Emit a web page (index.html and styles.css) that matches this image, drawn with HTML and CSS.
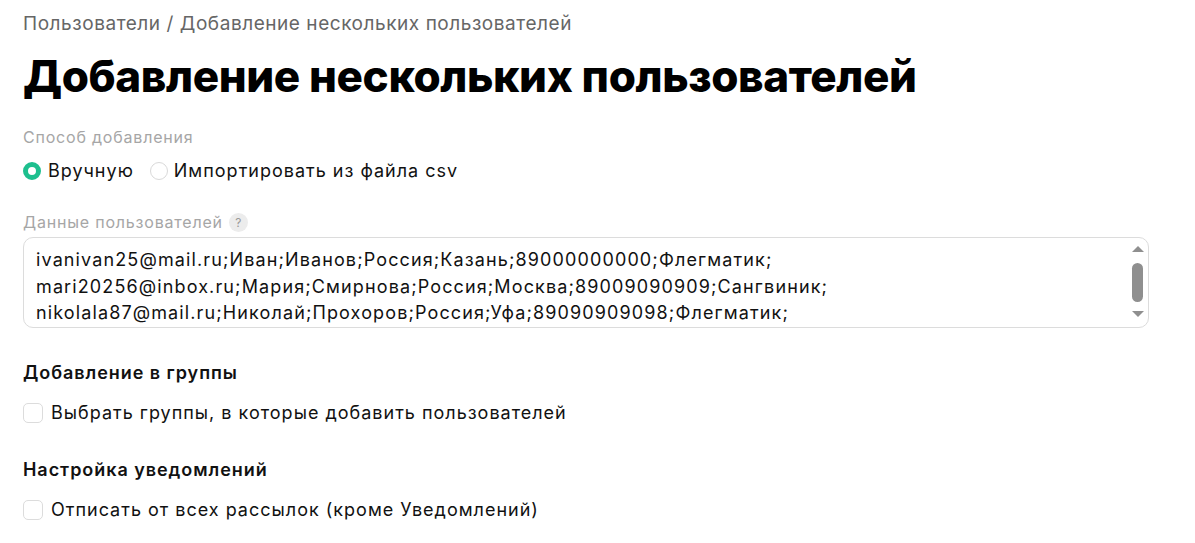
FILE: index.html
```html
<!DOCTYPE html>
<html lang="ru">
<head>
<meta charset="utf-8">
<title>Добавление нескольких пользователей</title>
<link rel="stylesheet" href="styles.css">
</head>
<body>
<div class="page">
  <div class="crumbs">Пользователи / Добавление нескольких пользователей</div>
  <h1 class="title">Добавление нескольких пользователей</h1>

  <div class="field method">
    <div class="label">Способ добавления</div>
    <div class="radios">
      <label class="radio"><span class="dot on"></span><span>Вручную</span></label>
      <label class="radio"><span class="dot"></span><span>Импортировать из файла csv</span></label>
    </div>
  </div>

  <div class="field data">
    <div class="label">Данные пользователей <span class="help">?</span></div>
    <div class="textbox">
      <div class="lines">
        <div>ivanivan25@mail.ru;Иван;Иванов;Россия;Казань;89000000000;Флегматик;</div>
        <div>mari20256@inbox.ru;Мария;Смирнова;Россия;Москва;89009090909;Сангвиник;</div>
        <div>nikolala87@mail.ru;Николай;Прохоров;Россия;Уфа;89090909098;Флегматик;</div>
      </div>
      <div class="sbar">
        <span class="arrow up"></span>
        <span class="thumb"></span>
        <span class="arrow down"></span>
      </div>
    </div>
  </div>

  <div class="section">
    <div class="heading">Добавление в группы</div>
    <label class="check"><span class="box"></span><span>Выбрать группы, в которые добавить пользователей</span></label>
  </div>

  <div class="section">
    <div class="heading">Настройка уведомлений</div>
    <label class="check"><span class="box"></span><span>Отписать от всех рассылок (кроме Уведомлений)</span></label>
  </div>
</div>
</body>
</html>
```

FILE: styles.css
```css
* { box-sizing: border-box; }
html, body { margin: 0; padding: 0; background: #fff; }
body {
  font-family: "Inter", "Noto Sans", sans-serif;
  color: #111;
}
.page {
  padding: 12px 46px 0 23px;
  display: flex;
  flex-direction: column;
}
.crumbs {
  font-size: 19px;
  line-height: 24px;
  letter-spacing: 0.55px;
  color: #666;
}
.title {
  margin: 14px 0 0;
  font-size: 44px;
  line-height: 52px;
  font-weight: 800;
  color: #000;
  letter-spacing: -0.4px;
}
.field { display: flex; flex-direction: column; }
.method { margin-top: 25px; }
.label {
  font-size: 16px;
  line-height: 20px;
  letter-spacing: 0.8px;
  color: #a6a6a6;
  display: flex;
  align-items: center;
  gap: 6px;
}
.radios {
  margin-top: 12px;
  display: flex;
  gap: 16px;
  font-size: 18px;
  line-height: 24px;
  letter-spacing: 1px;
}
.radio { display: flex; align-items: center; gap: 7px; }
.radio + .radio { gap: 6px; }
.dot {
  width: 18px; height: 18px; border-radius: 50%;
  border: 1px solid #d9d9d9; background: #fff;
  display: inline-block;
}
.dot.on {
  border: 5px solid #1dbf8e;
  background: #fff;
}
.data { margin-top: 29px; }
.help {
  width: 19px; height: 19px; border-radius: 50%;
  background: #ececec; color: #999;
  font-size: 12px; line-height: 19px; text-align: center;
  letter-spacing: 0;
}
.textbox {
  margin-top: 5px;
  position: relative;
  height: 91px;
  border: 1px solid #dcdcdc;
  border-radius: 10px;
  padding: 9px 30px 0 12px;
  font-size: 18px;
  line-height: 26.5px;
  letter-spacing: 1.12px;
  color: #111;
  overflow: hidden;
}
.sbar {
  position: absolute;
  top: 4px; right: 3px; bottom: 4px;
  width: 15px;
  display: flex; flex-direction: column; align-items: center;
}
.arrow { width: 0; height: 0; border-left: 6px solid transparent; border-right: 6px solid transparent; }
.arrow.up { border-bottom: 6px solid #8f8f8f; margin-top: 4px; }
.arrow.down { border-top: 6px solid #8f8f8f; margin-top: 9px; }
.thumb { width: 11px; height: 39px; border-radius: 6px; background: #8f8f8f; margin-top: 11px; }
.section { margin-top: 34px; display: flex; flex-direction: column; gap: 17px; }
.heading { font-size: 18px; line-height: 22px; font-weight: 600; letter-spacing: 0.95px; color: #111; }
.check { display: flex; align-items: center; gap: 8px; font-size: 18px; line-height: 24px; letter-spacing: 1px; }
.box {
  width: 20px; height: 20px; border-radius: 5px;
  border: 1px solid #dcdcdc; background: #fff; display: inline-block;
}
```
